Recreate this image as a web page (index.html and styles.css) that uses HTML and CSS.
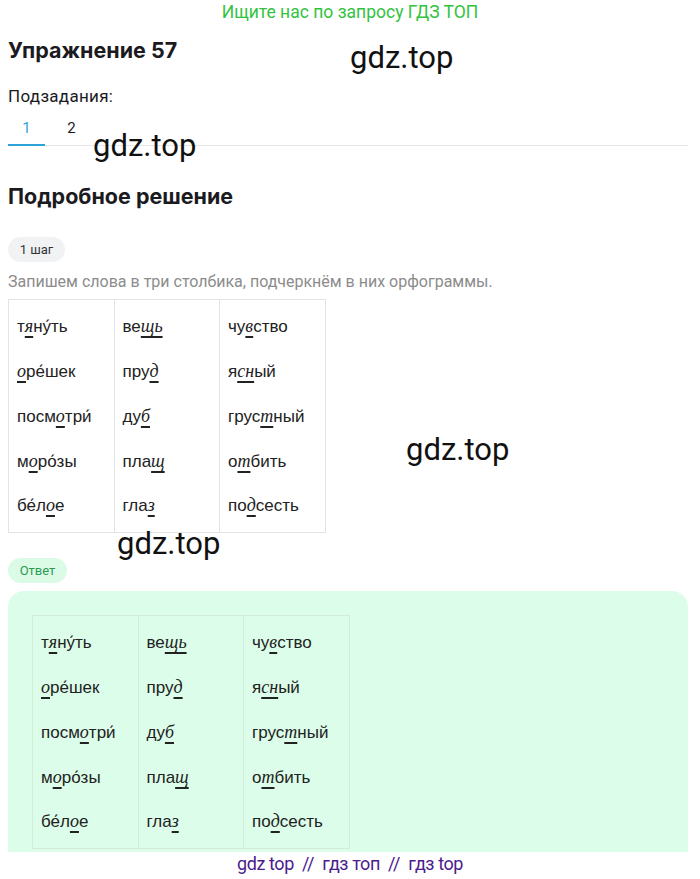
FILE: index.html
```html
<!DOCTYPE html>
<html lang="ru">
<head>
<meta charset="utf-8">
<link rel="stylesheet" href="styles.css">
</head>
<body>
<div class="banner">Ищите нас по запросу ГДЗ ТОП</div>
<div class="page">
  <h1 class="title">Упражнение 57</h1>
  <div class="sub-label">Подзадания:</div>
  <div class="tabs">
    <div class="tab active">1</div>
    <div class="tab">2</div>
  </div>
  <h2 class="title sol">Подробное решение</h2>
  <div class="pill step">1 шаг</div>
  <p class="desc">Запишем слова в три столбика, подчеркнём в них орфограммы.</p>
  <table class="words">
    <tr><td>т<u>я</u>ну́ть</td><td>ве<u>щь</u></td><td>чу<u>в</u>ство</td></tr>
    <tr><td><u>о</u>ре́шек</td><td>пру<u>д</u></td><td>я<u>сн</u>ый</td></tr>
    <tr><td>посм<u>о</u>три́</td><td>ду<u>б</u></td><td>грус<u>т</u>ный</td></tr>
    <tr><td>м<u>о</u>ро́зы</td><td>пла<u>щ</u></td><td>о<u>т</u>бить</td></tr>
    <tr><td>бе́л<u>о</u>е</td><td>гла<u>з</u></td><td>по<u>д</u>сесть</td></tr>
  </table>
  <div class="pill answer">Ответ</div>
  <div class="answer-box">
    <table class="words">
      <tr><td>т<u>я</u>ну́ть</td><td>ве<u>щь</u></td><td>чу<u>в</u>ство</td></tr>
      <tr><td><u>о</u>ре́шек</td><td>пру<u>д</u></td><td>я<u>сн</u>ый</td></tr>
      <tr><td>посм<u>о</u>три́</td><td>ду<u>б</u></td><td>грус<u>т</u>ный</td></tr>
      <tr><td>м<u>о</u>ро́зы</td><td>пла<u>щ</u></td><td>о<u>т</u>бить</td></tr>
      <tr><td>бе́л<u>о</u>е</td><td>гла<u>з</u></td><td>по<u>д</u>сесть</td></tr>
    </table>
  </div>
</div>
<div class="footer">gdz top &nbsp;//&nbsp; гдз топ &nbsp;//&nbsp; гдз top</div>
<div class="wm wm1">gdz.top</div>
<div class="wm wm2">gdz.top</div>
<div class="wm wm3">gdz.top</div>
<div class="wm wm4">gdz.top</div>
</body>
</html>
```
FILE: styles.css
```css
* { box-sizing: border-box; }
html, body { margin: 0; padding: 0; }
body {
  width: 700px;
  height: 879px;
  overflow: hidden;
  position: relative;
  font-family: Roboto, "Liberation Sans", sans-serif;
  color: #1b1b1f;
  background: #fff;
}
.banner {
  height: 24px;
  line-height: 24px;
  text-align: center;
  font-size: 17.5px;
  color: #33c23f;
}
.page { padding: 0 12px 0 8px; }
.title {
  margin: 0;
  font-family: Inter, Roboto, sans-serif;
  font-weight: 700;
  font-size: 21.5px;
  letter-spacing: 0;
  line-height: 28px;
}
h1.title { margin-top: 12px; }
.sub-label {
  margin-top: 22px;
  font-size: 17px;
  letter-spacing: 0.3px;
  line-height: 20px;
}
.tabs {
  margin-top: 12px;
  display: flex;
  border-bottom: 1px solid #e6e6e6;
}
.tab {
  width: 37px;
  text-align: center;
  font-size: 15px;
  line-height: 20px;
  padding-bottom: 6px;
  border-bottom: 2px solid transparent;
  margin-bottom: -1px;
}
.tab + .tab { margin-left: 8px; }
.tab.active { color: #2ea3d8; border-bottom-color: #2ea3d8; }
.sol { margin-top: 36px; }
.pill {
  display: inline-block;
  height: 25px;
  line-height: 25px;
  border-radius: 13px;
  font-size: 13px;
  padding: 0 8px;
}
.step { margin-top: 27px; background: #f1f2f3; color: #333; width: 57px; text-align: center; padding: 0; }
.desc {
  margin: 9px 0 0;
  font-size: 16px;
  line-height: 22px;
  color: #8c8c8c;
}
.words {
  border-collapse: collapse;
  margin-top: 6px;
  border: 1px solid #e3e3e3;
  font-family: "Liberation Sans", Arial, sans-serif;
  font-size: 17px;
  color: #222;
}
.words td {
  border-left: 1px solid #e3e3e3;
  border-right: 1px solid #e3e3e3;
  height: 45px;
  padding: 0 4px 0 8px;
  width: 105.5px;
  vertical-align: middle;
  white-space: nowrap;
}
.words tr:first-child td { height: 49px; padding-top: 4px; }
.words tr:last-child td { height: 49px; padding-bottom: 4px; }
.words u {
  font-family: "Liberation Serif", serif;
  font-style: italic;
  font-size: 18px;
  text-decoration-thickness: 1.5px;
  text-underline-offset: 4px;
}
.answer { margin-top: 25px; background: #dcfbe6; color: #2a9a52; width: 59px; text-align: center; padding: 0; display: block; }
.answer-box {
  margin-top: 8px;
  width: 680px;
  height: 261px;
  background: #dcfde9;
  border-radius: 16px 16px 0 0;
  padding: 24px 24px 0;
}
.answer-box .words { margin-top: 0; border-color: #d2ecd9; }
.answer-box .words td { border-color: #d2ecd9; }
.footer {
  text-align: center;
  font-family: Roboto, "Liberation Sans", sans-serif;
  font-size: 18px;
  color: #4b1c8c;
  line-height: 24px;
  letter-spacing: -0.4px;
}
.wm {
  position: absolute;
  font-family: Roboto, sans-serif;
  font-size: 31px;
  color: #111;
  line-height: 34px;
}
.wm1 { left: 350px; top: 41px; }
.wm2 { left: 93px; top: 129px; }
.wm3 { left: 406px; top: 433px; }
.wm4 { left: 117px; top: 527px; }
```
